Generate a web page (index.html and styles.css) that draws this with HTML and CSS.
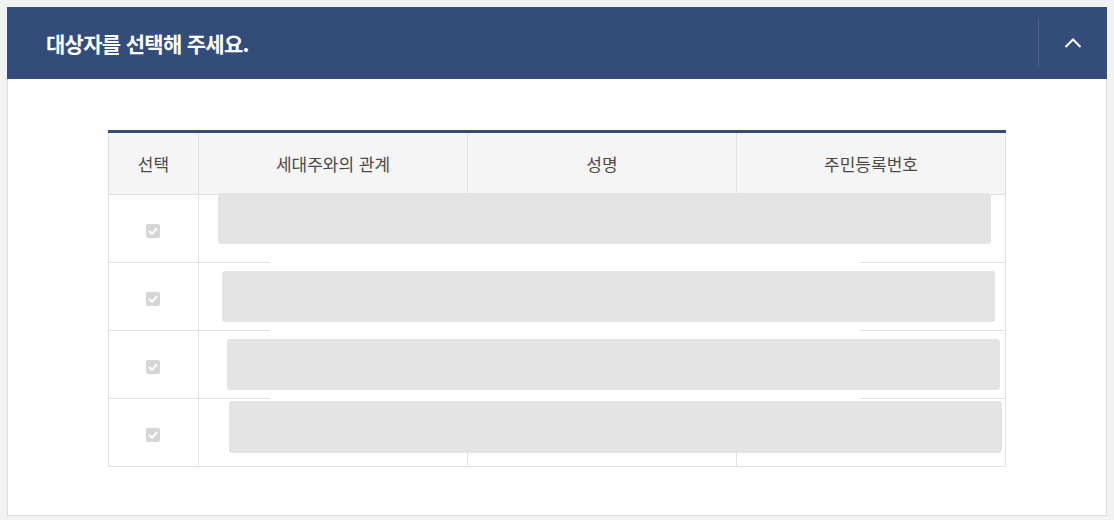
FILE: index.html
```html
<!DOCTYPE html>
<html lang="ko">
<head>
    <meta charset="UTF-8">
    <title>대상자 선택</title>
    <link rel="stylesheet" href="styles.css">
</head>
<body>
    <div class="panel">
        <div class="panel-head">
            <h2 class="panel-title">대상자를 선택해 주세요.</h2>
            <button class="toggle-btn" type="button" aria-label="접기">
                <svg width="18" height="12" viewBox="0 0 18 12"><path d="M1.5 10 L9 2.5 L16.5 10" fill="none" stroke="#fff" stroke-width="2"/></svg>
            </button>
        </div>
        <div class="panel-body">
            <div class="table-wrap">
                <table class="target-table">
                    <colgroup>
                        <col class="col-check">
                        <col>
                        <col>
                        <col>
                    </colgroup>
                    <thead>
                        <tr>
                            <th>선택</th>
                            <th>세대주와의 관계</th>
                            <th>성명</th>
                            <th>주민등록번호</th>
                        </tr>
                    </thead>
                    <tbody>
                        <tr>
                            <td><span class="chk"><svg width="10" height="8" viewBox="0 0 10 8"><path d="M1 4 L4 6.8 L9 1.2" fill="none" stroke="#fff" stroke-width="2"/></svg></span></td>
                            <td></td><td></td><td></td>
                        </tr>
                        <tr>
                            <td><span class="chk"><svg width="10" height="8" viewBox="0 0 10 8"><path d="M1 4 L4 6.8 L9 1.2" fill="none" stroke="#fff" stroke-width="2"/></svg></span></td>
                            <td></td><td></td><td></td>
                        </tr>
                        <tr>
                            <td><span class="chk"><svg width="10" height="8" viewBox="0 0 10 8"><path d="M1 4 L4 6.8 L9 1.2" fill="none" stroke="#fff" stroke-width="2"/></svg></span></td>
                            <td></td><td></td><td></td>
                        </tr>
                        <tr>
                            <td><span class="chk"><svg width="10" height="8" viewBox="0 0 10 8"><path d="M1 4 L4 6.8 L9 1.2" fill="none" stroke="#fff" stroke-width="2"/></svg></span></td>
                            <td></td><td></td><td></td>
                        </tr>
                    </tbody>
                </table>
                <!-- masked personal data -->
                <div class="cover cover-1"></div>
                <div class="cover cover-2"></div>
                <div class="cover cover-3"></div>
                <div class="mask mask-1"></div>
                <div class="mask mask-2"></div>
                <div class="mask mask-3"></div>
                <div class="mask mask-4"></div>
            </div>
        </div>
    </div>
</body>
</html>
```
FILE: styles.css
```css
body {
    margin: 0;
    padding: 7px;
    background-color: #f2f2f2;
    font-family: "Noto Sans CJK KR", "Noto Sans", sans-serif;
}
.panel {
    width: 1100px;
    height: 509px;
    box-sizing: border-box;
    background-color: #fff;
    border: 1px solid #dcdcdc;
    border-top: none;
}
.panel-head {
    display: flex;
    align-items: center;
    height: 72px;
    margin-left: -1px;
    margin-right: -1px;
    background-color: #344c79;
}
.panel-title {
    flex: 1;
    margin: 0;
    padding-left: 39px;
    color: #fff;
    font-size: 21px;
    font-weight: 700;
    letter-spacing: -0.7px;
}
.toggle-btn {
    display: flex;
    align-items: center;
    justify-content: center;
    width: 68px;
    height: 48px;
    margin-right: 1px;
    padding: 0;
    border: none;
    border-left: 1px solid #4a618a;
    background: none;
    cursor: pointer;
}
.panel-body {
    padding-top: 51px;
}
.table-wrap {
    position: relative;
    width: 898px;
    margin-left: 100px;
    border-top: 3px solid #344c79;
}
.target-table {
    width: 100%;
    border-collapse: collapse;
    table-layout: fixed;
    border: 1px solid #e1e1e1;
    border-top: none;
}
.col-check {
    width: 90px;
}
.target-table th {
    height: 61px;
    padding: 0;
    background-color: #f5f5f5;
    border: 1px solid #e1e1e1;
    border-top: none;
    color: #4a4a4a;
    font-size: 17px;
    font-weight: 400;
}
.target-table td {
    height: 67px;
    padding: 0;
    border: 1px solid #e1e1e1;
    text-align: center;
}
.chk {
    display: inline-flex;
    align-items: center;
    justify-content: center;
    width: 14px;
    height: 14px;
    margin-left: -2px;
    border-radius: 2px;
    background-color: #d6d6d6;
    vertical-align: middle;
}
.cover {
    position: absolute;
    left: 162px;
    width: 590px;
    background-color: #fff;
}
.cover-1 { top: 111px; height: 27px; }
.cover-2 { top: 189px; height: 17px; }
.cover-3 { top: 257px; height: 11px; }
.mask {
    position: absolute;
    width: 773px;
    height: 51px;
    border-radius: 3px;
    background-color: #e4e4e4;
}
.mask-1 { left: 110px; top: 60px; }
.mask-2 { left: 114px; top: 138px; }
.mask-3 { left: 119px; top: 206px; }
.mask-4 { left: 121px; top: 268px; height: 52px; }
```
